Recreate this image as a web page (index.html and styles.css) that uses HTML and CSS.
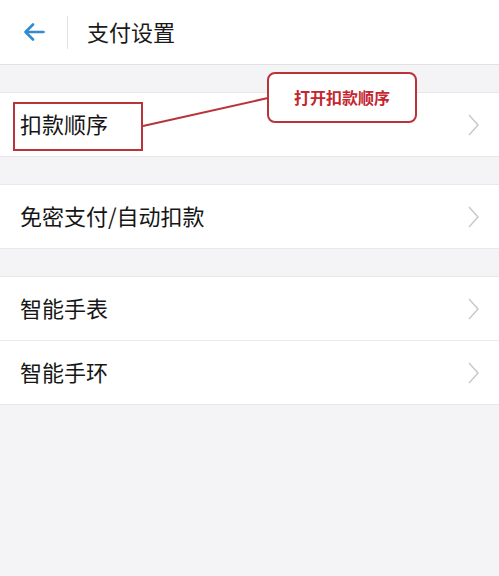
FILE: index.html
```html
<!DOCTYPE html>
<html lang="zh-CN">
<head>
    <meta charset="UTF-8">
    <meta name="viewport" content="width=device-width, initial-scale=1.0">
    <title>支付设置</title>
    <link rel="stylesheet" href="styles.css">
</head>
<body>
    <!-- 顶部导航 -->
    <div class="header">
        <button class="back-button">
            <svg width="22" height="18" viewBox="0 0 22 18">
                <path d="M20.5 9H2.5M10 1.5L2.5 9l7.5 7.5" fill="none" stroke="#2e8bd4" stroke-width="2.6" stroke-linecap="round" stroke-linejoin="round"/>
            </svg>
        </button>
        <div class="header-divider"></div>
        <h1 class="title">支付设置</h1>
    </div>

    <div class="group">
        <div class="row">
            <span class="row-label">扣款顺序</span>
            <svg class="chevron" width="11" height="22" viewBox="0 0 11 22"><polyline points="1,1 10,11 1,21" fill="none" stroke="#c9c9cd" stroke-width="1.5"/></svg>
        </div>
    </div>

    <div class="group">
        <div class="row">
            <span class="row-label">免密支付/自动扣款</span>
            <svg class="chevron" width="11" height="22" viewBox="0 0 11 22"><polyline points="1,1 10,11 1,21" fill="none" stroke="#c9c9cd" stroke-width="1.5"/></svg>
        </div>
    </div>

    <div class="group">
        <div class="row">
            <span class="row-label">智能手表</span>
            <svg class="chevron" width="11" height="22" viewBox="0 0 11 22"><polyline points="1,1 10,11 1,21" fill="none" stroke="#c9c9cd" stroke-width="1.5"/></svg>
        </div>
        <div class="row">
            <span class="row-label">智能手环</span>
            <svg class="chevron" width="11" height="22" viewBox="0 0 11 22"><polyline points="1,1 10,11 1,21" fill="none" stroke="#c9c9cd" stroke-width="1.5"/></svg>
        </div>
    </div>

    <!-- 标注 -->
    <svg class="mark-line" width="499" height="576">
        <line x1="143" y1="126" x2="268" y2="98" stroke="#b8343a" stroke-width="2"/>
    </svg>
    <div class="mark-box"></div>
    <div class="mark-callout">打开扣款顺序</div>
</body>
</html>
```

FILE: styles.css
```css
body {
    font-family: "Noto Sans CJK SC", "Noto Sans", sans-serif;
    background: #f4f4f6;
    color: #161616;
    margin: 0;
    padding: 0;
    min-height: 576px;
    position: relative;
}

.header {
    height: 64px;
    background: #fff;
    border-bottom: 1px solid #e2e2e4;
    display: flex;
    align-items: center;
}

.back-button {
    width: 67px;
    height: 64px;
    background: transparent;
    border: none;
    padding: 0;
    display: flex;
    align-items: center;
    justify-content: center;
    cursor: pointer;
}

.header-divider {
    width: 1px;
    height: 33px;
    background: #e0e0e2;
}

.title {
    margin: 0 0 2px 19px;
    font-size: 22px;
    font-weight: normal;
    color: #1a1a1a;
    line-height: 1;
}

.group {
    margin-top: 27px;
    background: #fff;
    border-top: 1px solid #e8e8ea;
    border-bottom: 1px solid #e8e8ea;
}

.row {
    height: 63px;
    display: flex;
    align-items: center;
    justify-content: space-between;
    padding: 0 20px 0 20px;
}

.row + .row {
    border-top: 1px solid #ebebed;
}

.row-label {
    font-size: 22px;
    line-height: 1;
    padding-bottom: 3px;
}

.chevron {
    display: block;
}

.mark-line {
    position: absolute;
    top: 0;
    left: 0;
    pointer-events: none;
}

.mark-box {
    position: absolute;
    left: 13px;
    top: 102px;
    width: 126px;
    height: 45px;
    border: 2px solid #b8343a;
}

.mark-callout {
    position: absolute;
    left: 267px;
    top: 72px;
    width: 146px;
    height: 47px;
    border: 2px solid #b8343a;
    border-radius: 8px;
    background: #fff;
    color: #c3262e;
    font-size: 16px;
    font-weight: bold;
    display: flex;
    align-items: center;
    justify-content: center;
    padding-bottom: 2px;
    box-sizing: border-box;
    height: 51px;
    width: 150px;
}
```
